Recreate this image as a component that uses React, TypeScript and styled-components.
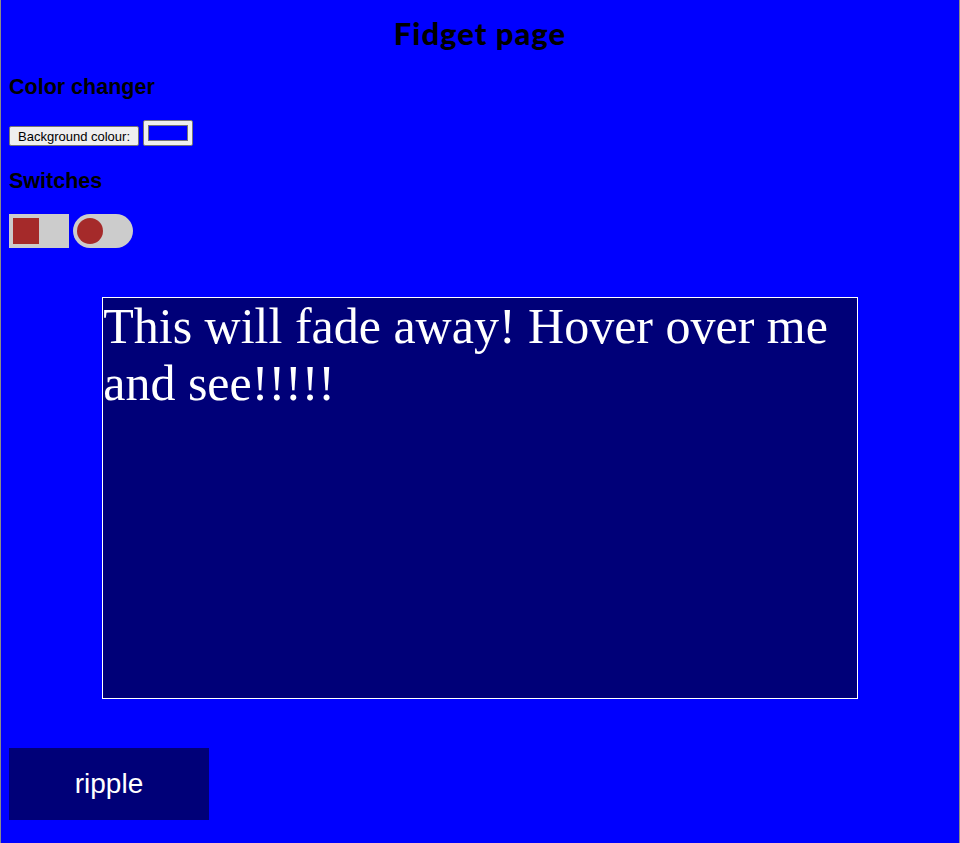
import React from "react";
import styled, { createGlobalStyle } from "styled-components";

const Global = createGlobalStyle`
  html {
    background: #0000ff;
    border-left: 1px solid #8a8a8a;
    border-right: 1px solid #8a8a8a;
    min-height: 100%;
  }
  body {
    margin: 8px;
    background: #0000ff;
    font-family: "Liberation Serif", serif;
  }
`;

const Page = styled.div`
  display: flex;
  flex-direction: column;
`;

const Title = styled.h1`
  margin: 7px 0 0;
  text-align: center;
  font-family: "Lato", "Noto Sans", sans-serif;
  font-weight: 900;
  font-size: 31px;
  letter-spacing: 1px;
  line-height: 36px;
  color: #000;
`;

const Heading = styled.h3<{ $top: number }>`
  margin: ${(p) => p.$top}px 0 0;
  font-family: "Liberation Sans", Arial, sans-serif;
  font-weight: 700;
  font-size: 21.5px;
  line-height: 24px;
  color: #000;
`;

const Row = styled.div<{ $top: number }>`
  display: flex;
  align-items: flex-end;
  gap: 4px;
  margin-top: ${(p) => p.$top}px;
`;

const SmallButton = styled.button`
  font-family: "Liberation Sans", Arial, sans-serif;
  font-size: 13px;
  height: 20px;
  padding: 0 8px;
  background: #efefef;
  border: 1px solid #767676;
  border-radius: 2px;
  color: #000;
`;

const ColorBox = styled.div`
  width: 50px;
  height: 26px;
  box-sizing: border-box;
  background: #efefef;
  border: 1px solid #767676;
  border-radius: 2px;
  display: flex;
  align-items: center;
  justify-content: center;
`;

const Swatch = styled.div`
  width: 38px;
  height: 14px;
  background: #0000ff;
  border: 1px solid #777;
`;

const Switch = styled.div<{ $round?: boolean }>`
  width: 60px;
  height: 34px;
  box-sizing: border-box;
  padding: 4px;
  background: #cccccc;
  border-radius: ${(p) => (p.$round ? "34px" : "0")};
  display: flex;
  align-items: center;
`;

const Knob = styled.div<{ $round?: boolean }>`
  width: 26px;
  height: 26px;
  background: #a52a2a;
  border-radius: ${(p) => (p.$round ? "50%" : "0")};
`;

const FadeBox = styled.div`
  margin: 49px auto 0;
  width: 80%;
  height: 400px;
  background: #000078;
  border: 1px solid #ffffff;
  color: #fff;
  font-family: "Liberation Serif", "Times New Roman", serif;
  font-size: 50px;
  line-height: 57px;
`;

const Ripple = styled.button`
  margin-top: 49px;
  width: 200px;
  height: 72px;
  background: #000078;
  border: none;
  color: #fff;
  font-family: "Liberation Sans", Arial, sans-serif;
  font-size: 28px;
  align-self: flex-start;
`;

export default function App() {
  return (
    <>
      <Global />
      <Page>
        <Title>Fidget page</Title>
        <Heading $top={24}>Color changer</Heading>
        <Row $top={21}>
          <SmallButton>Background colour:</SmallButton>
          <ColorBox>
            <Swatch />
          </ColorBox>
        </Row>
        <Heading $top={23}>Switches</Heading>
        <Row $top={21}>
          <Switch>
            <Knob />
          </Switch>
          <Switch $round>
            <Knob $round />
          </Switch>
        </Row>
        <FadeBox>This will fade away! Hover over me and see!!!!!</FadeBox>
        <Ripple>ripple</Ripple>
      </Page>
    </>
  );
}
